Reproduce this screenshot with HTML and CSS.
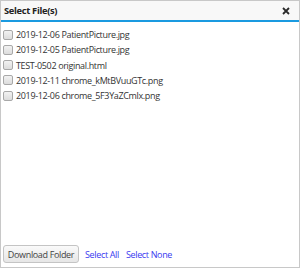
FILE: index.html
```html
<!DOCTYPE html>
<html lang="en">
  <head>
    <meta charset="UTF-8" />
    <title>Select File(s)</title>
    <link rel="stylesheet" href="styles.css">
  </head>
  <body>
    <div class="dialog">
      <div class="dialog-header">
        <span class="dialog-title">Select File(s)</span>
        <svg class="dialog-close" width="8" height="8" viewBox="0 0 8 8">
          <path d="M1 1 L7 7 M7 1 L1 7" stroke="#2a2a2a" stroke-width="1.8" />
        </svg>
      </div>
      <div class="dialog-body">
        <ul class="file-list">
          <li><label><input type="checkbox" /> 2019-12-06 PatientPicture.jpg</label></li>
          <li><label><input type="checkbox" /> 2019-12-05 PatientPicture.jpg</label></li>
          <li><label><input type="checkbox" /> TEST-0502 original.html</label></li>
          <li><label><input type="checkbox" /> 2019-12-11 chrome_kMtBVuuGTc.png</label></li>
          <li><label><input type="checkbox" /> 2019-12-06 chrome_5F3YaZCmlx.png</label></li>
        </ul>
      </div>
      <div class="dialog-footer">
        <button class="btn">Download Folder</button>
        <a class="link" href="#">Select All</a>
        <a class="link" href="#">Select None</a>
      </div>
    </div>
  </body>
</html>
```

FILE: styles.css
```css
* {
  box-sizing: border-box;
  margin: 0;
  padding: 0;
}
body {
  font-family: "Open Sans", "DejaVu Sans", sans-serif;
  background: #fff;
}

/* Dialog */
.dialog {
  width: 300px;
  height: 268px;
  border: 1px solid #c8c8c8;
  display: flex;
  flex-direction: column;
  background: #fff;
}
.dialog-header {
  height: 21px;
  background: #f8f8f8;
  border-bottom: 2px solid #1a9ae0;
  display: flex;
  align-items: center;
  justify-content: space-between;
  padding: 0 9px 0 3px;
}
.dialog-title {
  font-size: 9.3px;
  font-weight: 700;
  letter-spacing: -0.3px;
  color: #222;
}
.dialog-close {
  display: block;
}

/* File list */
.dialog-body {
  flex: 1;
  padding: 5px 2px 0;
}
.file-list {
  list-style: none;
}
.file-list li {
  height: 15.25px;
  display: flex;
  align-items: center;
}
.file-list label {
  display: flex;
  align-items: center;
  font-size: 9px;
  letter-spacing: -0.35px;
  color: #333;
}
.file-list input {
  appearance: none;
  width: 10px;
  height: 10px;
  margin: 0 3px 0 0;
  border: 1px solid #a8a8a8;
  border-radius: 2px;
  background: linear-gradient(#f2f2f2, #dcdcdc);
}

/* Footer */
.dialog-footer {
  display: flex;
  align-items: center;
  padding: 0 2px 2px;
  height: 24px;
}
.btn {
  font-family: inherit;
  font-size: 9px;
  letter-spacing: -0.35px;
  color: #444;
  background: linear-gradient(#fafafa, #e6e6e6);
  border: 1px solid #c4c4c4;
  border-radius: 3px;
  height: 18px;
  width: 76px;
  margin-right: 6px;
}
.link {
  font-size: 9px;
  letter-spacing: -0.35px;
  color: #3a3af0;
  text-decoration: none;
  margin-right: 7px;
}
```
